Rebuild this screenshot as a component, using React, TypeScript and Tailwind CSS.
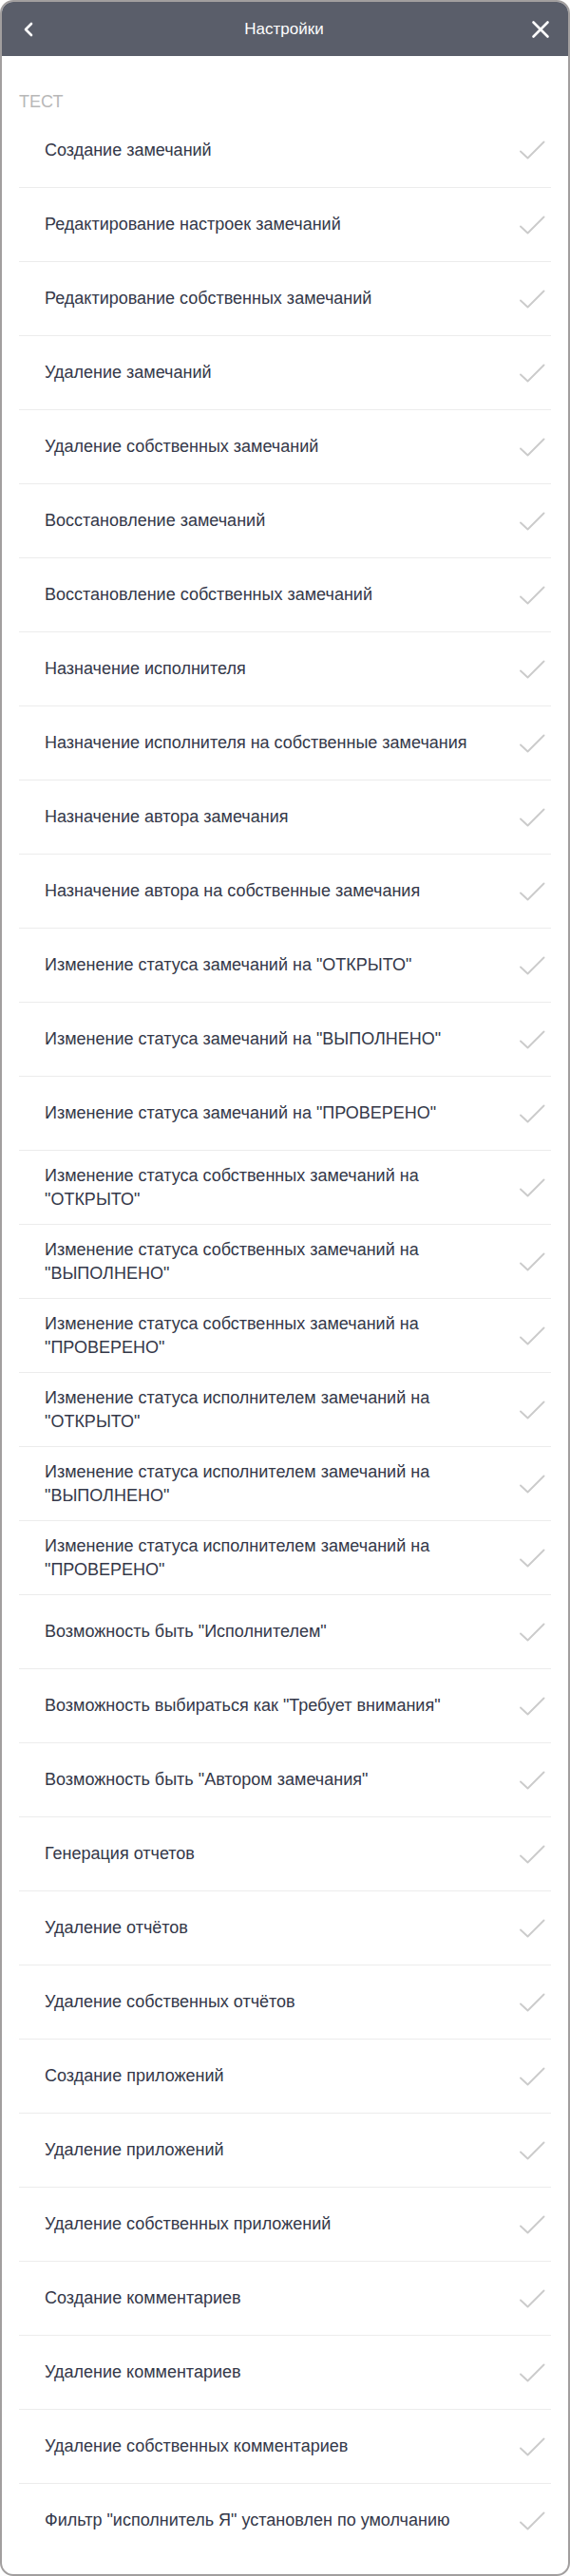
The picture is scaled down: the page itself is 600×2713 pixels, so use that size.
import React from 'react'

const ITEMS: string[] = [
  'Создание замечаний',
  'Редактирование настроек замечаний',
  'Редактирование собственных замечаний',
  'Удаление замечаний',
  'Удаление собственных замечаний',
  'Восстановление замечаний',
  'Восстановление собственных замечаний',
  'Назначение исполнителя',
  'Назначение исполнителя на собственные замечания',
  'Назначение автора замечания',
  'Назначение автора на собственные замечания',
  'Изменение статуса замечаний на "ОТКРЫТО"',
  'Изменение статуса замечаний на "ВЫПОЛНЕНО"',
  'Изменение статуса замечаний на "ПРОВЕРЕНО"',
  'Изменение статуса собственных замечаний на "ОТКРЫТО"',
  'Изменение статуса собственных замечаний на "ВЫПОЛНЕНО"',
  'Изменение статуса собственных замечаний на "ПРОВЕРЕНО"',
  'Изменение статуса исполнителем замечаний на "ОТКРЫТО"',
  'Изменение статуса исполнителем замечаний на "ВЫПОЛНЕНО"',
  'Изменение статуса исполнителем замечаний на "ПРОВЕРЕНО"',
  'Возможность быть "Исполнителем"',
  'Возможность выбираться как "Требует внимания"',
  'Возможность быть "Автором замечания"',
  'Генерация отчетов',
  'Удаление отчётов',
  'Удаление собственных отчётов',
  'Создание приложений',
  'Удаление приложений',
  'Удаление собственных приложений',
  'Создание комментариев',
  'Удаление комментариев',
  'Удаление собственных комментариев',
  'Фильтр "исполнитель Я" установлен по умолчанию',
]

function Check() {
  return (
    <svg width="27" height="20" viewBox="0 0 27 20" fill="none" className="shrink-0">
      <path d="M1 11.5 L8.5 18.5 L25.5 1.5" stroke="#cbcbcb" strokeWidth="1.9" strokeLinecap="round" strokeLinejoin="round" />
    </svg>
  )
}

export default function App() {
  return (
    <div className="bg-white w-[600px] h-[2713px]" style={{ fontFamily: '"Liberation Sans", Arial, sans-serif' }}>
      <div className="h-full border-2 border-[#a29f9f] rounded-[14px] overflow-hidden flex flex-col">
        <div className="h-[57px] shrink-0 bg-[#5a5e6a] flex items-center justify-between px-[21px]">
          <svg width="16" height="16" viewBox="0 0 16 16" fill="none">
            <path d="M10 2 L4 8 L10 14" stroke="#ffffff" strokeWidth="2.6" strokeLinecap="round" strokeLinejoin="round" />
          </svg>
          <div className="text-white text-[17px] leading-[20px]">Настройки</div>
          <svg width="20" height="20" viewBox="0 0 20 20" fill="none" className="mr-[-2px]">
            <path d="M2.5 2.5 L17.5 17.5 M17.5 2.5 L2.5 17.5" stroke="#ffffff" strokeWidth="2.6" strokeLinecap="round" />
          </svg>
        </div>
        <div className="flex-1 px-[18px] pt-[37px]">
          <div className="text-[18px] leading-[22px] text-[#b8b8b8] mb-[1px]">ТЕСТ</div>
          <div>
            {ITEMS.map((item, i) => (
              <div
                key={i}
                className={`h-[78px] flex items-center justify-between pl-[27px] pr-[6px] ${i > 0 ? 'border-t border-[#ececec]' : ''}`}
              >
                <div className="text-[18px] leading-[25px] text-[#343849] max-w-[470px]">{item}</div>
                <Check />
              </div>
            ))}
          </div>
        </div>
      </div>
    </div>
  )
}
